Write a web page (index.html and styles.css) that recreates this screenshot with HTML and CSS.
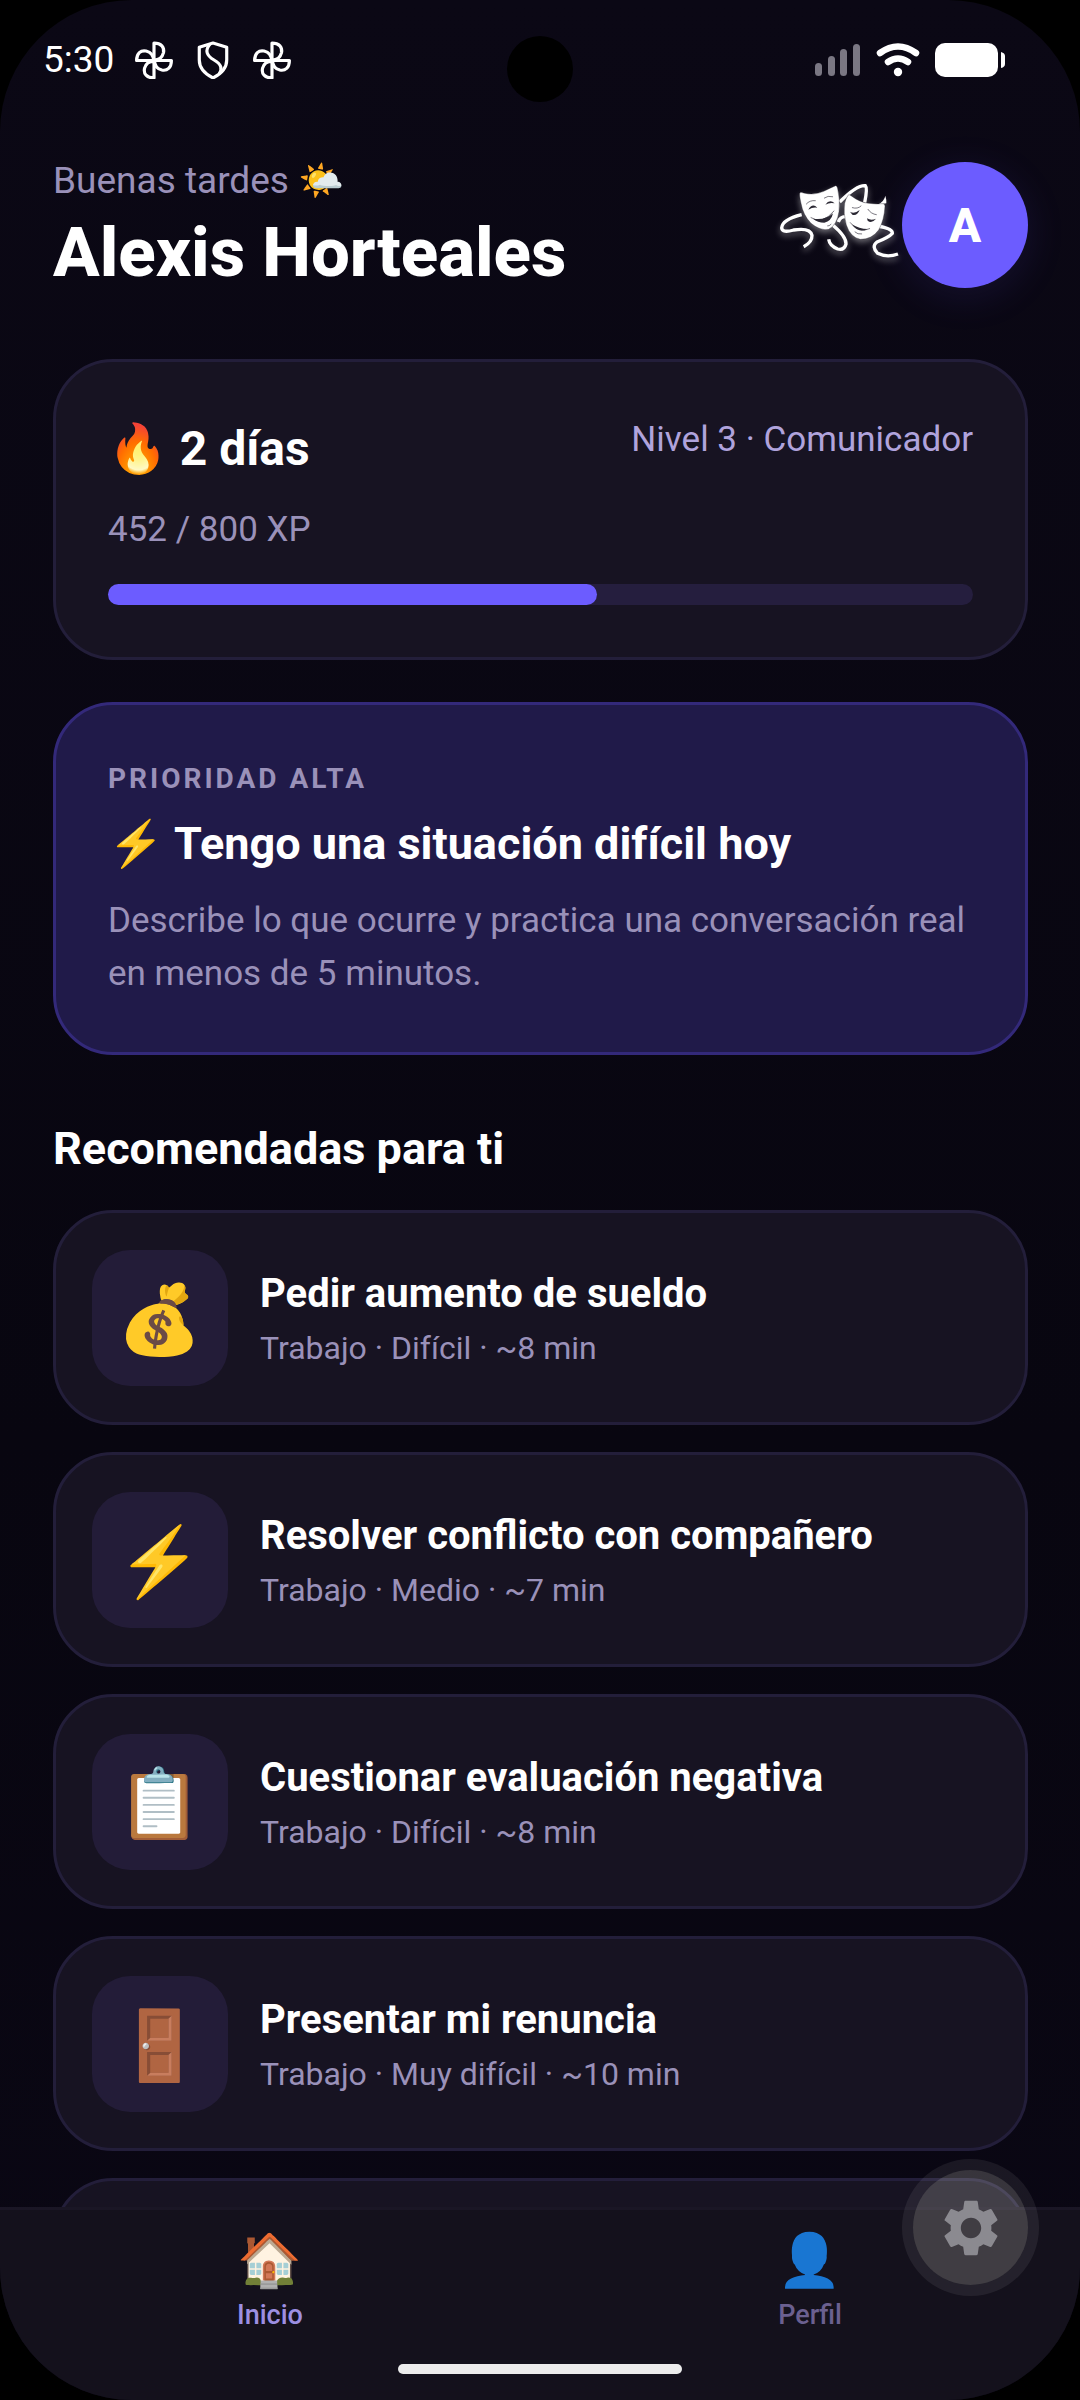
FILE: index.html
```html
<!DOCTYPE html>
<html lang="es">
<head>
<meta charset="utf-8">
<meta name="viewport" content="width=device-width, initial-scale=1">
<title>Inicio</title>
<link rel="stylesheet" href="styles.css">
</head>
<body>
<svg class="defs" aria-hidden="true">
  <symbol id="pinwheel" viewBox="0 0 36 36">
    <g fill="none" stroke="#fff" stroke-width="3" stroke-linejoin="round">
      <path d="M18 19V2C25 2 28 6 27 11C26 15 23 18 18 18"/>
      <path d="M18 19V2C25 2 28 6 27 11C26 15 23 18 18 18" transform="rotate(90 18 18.500)"/>
      <path d="M18 19V2C25 2 28 6 27 11C26 15 23 18 18 18" transform="rotate(180 18 18.500)"/>
      <path d="M18 19V2C25 2 28 6 27 11C26 15 23 18 18 18" transform="rotate(270 18 18.500)"/>
    </g>
  </symbol>
</svg>
<div class="screen">
  <div class="status">
    <div class="status-group status-left">
      <time class="clock">5:30</time>
      <svg class="status-icon" aria-hidden="true"><use href="#pinwheel"/></svg>
      <svg class="status-icon" viewBox="0 0 36 36" aria-hidden="true"><g fill="none" stroke="#fff" stroke-width="3" stroke-linejoin="round"><path d="M18 2L31 6V18C31 26 26 31 18 35C10 31 5 26 5 18V6Z"/><path d="M15 3C10 9 12 14 19 18C26 22 27 26 24 31"/></g></svg>
      <svg class="status-icon" aria-hidden="true"><use href="#pinwheel"/></svg>
    </div>
    <span class="camera"></span>
    <div class="status-group status-right">
      <svg class="signal" viewBox="0 0 46 34" aria-hidden="true"><g fill="#7a7783"><rect x="0" y="20" width="7" height="13" rx="3.500"/><rect x="13" y="13" width="7" height="20" rx="3.500"/><rect x="25" y="6" width="7" height="27" rx="3.500"/><rect x="38" y="1" width="7" height="32" rx="3.500"/></g></svg>
      <svg class="wifi" viewBox="0 0 44 34" aria-hidden="true"><g fill="none" stroke="#fff" stroke-width="6.500" stroke-linecap="round"><path d="M4 10Q22 -3 40 10"/><path d="M12 19Q22 12 32 19"/></g><circle cx="22" cy="29" r="4.200" fill="#fff"/></svg>
      <svg class="battery" viewBox="0 0 71 34" aria-hidden="true"><rect width="63" height="34" rx="10" fill="#fff"/><path d="M66 9Q70 10 70 13V21Q70 24 66 25Z" fill="#fff"/></svg>
    </div>
  </div>

  <main class="content">
    <header class="header">
      <div class="hello">
        <p class="greeting">Buenas tardes 🌤️</p>
        <h1 class="name">Alexis Horteales</h1>
      </div>
      <svg class="masks" viewBox="50 90 375 270" role="img" aria-label="Máscaras de teatro">
        <g fill="none" stroke="#fff" stroke-width="10">
          <path d="M124 194Q66 208 64 234Q66 250 100 240Q150 232 155 256Q156 276 130 290"/>
          <path d="M218 226Q258 260 257 282Q252 302 232 297Q208 288 205 268"/>
          <path d="M234 216Q240 198 258 200"/>
          <path d="M238 156Q290 104 315 107Q322 114 313 158"/>
          <path d="M352 228Q398 236 396 250Q385 262 350 276Q332 290 352 310Q380 324 413 312"/>
        </g>
        <path fill="#fff" d="M352 164Q372 154 375 137Q379 150 378 160Z"/>
        <path fill="#fff" stroke="#17141f" stroke-width="1" d="M118 130Q120 124 130 129Q160 137 190 124Q212 113 226 107Q231 107 232 116Q240 150 236 185Q230 225 205 238Q180 243 152 220Q128 195 122 160Q117 138 118 130Z"/>
        <path fill="#fff" stroke="#17141f" stroke-width="1" d="M262 138Q264 131 272 137Q300 158 325 160Q350 163 366 161Q374 160 374 168Q372 210 355 240Q335 268 300 268Q270 262 258 225Q248 190 253 160Q256 146 262 138Z"/>
        <g fill="none" stroke="#3a3742" stroke-width="2" stroke-linecap="round">
          <path d="M138 162Q148 150 165 152"/><path d="M192 144Q202 136 217 140"/>
          <path d="M152 203Q185 226 221 183"/><path d="M202 228Q206 229 212 223"/>
          <path d="M276 173Q292 178 302 168"/><path d="M323 178Q332 192 348 194"/>
          <path d="M270 218Q294 252 328 236"/><path d="M284 246Q292 254 304 252"/>
        </g>
        <g fill="#2b2833">
          <path d="M144 179Q156 158 171 173Q158 170 144 179Z"/><path d="M195 164Q208 146 223 160Q208 156 195 164Z"/>
          <path d="M158 206Q194 212 218 190Q213 214 192 218Q172 218 158 206Z"/>
          <path d="M269 185Q282 193 298 180Q290 199 276 194Z"/><path d="M320 205Q332 213 347 206Q334 222 322 212Z"/>
          <path d="M275 223Q296 237 322 237Q294 251 275 223Z"/>
        </g>
      </svg>
      <button class="avatar" type="button" aria-label="Cuenta de Alexis">A</button>
    </header>

    <section class="card progress-card">
      <div class="streak-row">
        <p class="streak">🔥 2 días</p>
        <p class="level">Nivel 3 · Comunicador</p>
      </div>
      <p class="xp">452 / 800 XP</p>
      <div class="track" role="progressbar" aria-valuemin="0" aria-valuemax="800" aria-valuenow="452" aria-label="Experiencia"><div class="fill" style="width: 56.5%"></div></div>
    </section>

    <a class="card priority" href="#situacion">
      <span class="eyebrow">PRIORIDAD ALTA</span>
      <strong class="priority-title">⚡ Tengo una situación difícil hoy</strong>
      <span class="priority-text">Describe lo que ocurre y practica una conversación real en menos de 5 minutos.</span>
    </a>

    <h2 class="section-title">Recomendadas para ti</h2>
    <ul class="list">
      <li><a class="card item" href="#aumento"><span class="item-icon">💰</span><span class="item-body"><span class="item-title">Pedir aumento de sueldo</span><span class="item-meta">Trabajo · Difícil · ~8 min</span></span></a></li>
      <li><a class="card item" href="#conflicto"><span class="item-icon">⚡</span><span class="item-body"><span class="item-title">Resolver conflicto con compañero</span><span class="item-meta">Trabajo · Medio · ~7 min</span></span></a></li>
      <li><a class="card item" href="#evaluacion"><span class="item-icon">📋</span><span class="item-body"><span class="item-title">Cuestionar evaluación negativa</span><span class="item-meta">Trabajo · Difícil · ~8 min</span></span></a></li>
      <li><a class="card item" href="#renuncia"><span class="item-icon">🚪</span><span class="item-body"><span class="item-title">Presentar mi renuncia</span><span class="item-meta">Trabajo · Muy difícil · ~10 min</span></span></a></li>
      <li><div class="card item"></div></li>
    </ul>
  </main>

  <footer class="bottom">
    <nav class="tabs">
      <a class="tab tab-active" href="#inicio"><span class="tab-icon">🏠</span><span>Inicio</span></a>
      <a class="tab" href="#perfil"><span class="tab-icon">👤</span><span>Perfil</span></a>
    </nav>
    <div class="home-bar"></div>
  </footer>

  <button class="fab" type="button" aria-label="Ajustes">
    <svg viewBox="0 0 24 24" aria-hidden="true"><path d="M19.140 12.940c.04-.3.06-.61.06-.94 0-.32-.02-.64-.07-.94l2.030-1.580c.18-.14.23-.41.12-.61l-1.920-3.320c-.12-.22-.37-.29-.59-.22l-2.390.96c-.5-.38-1.030-.7-1.620-.94l-.36-2.540c-.04-.24-.24-.41-.48-.41h-3.840c-.24 0-.43.17-.47.41l-.36 2.540c-.59.24-1.130.57-1.620.94l-2.390-.96c-.22-.08-.47 0-.59.22L2.740 8.870c-.12.21-.08.47.12.61l2.030 1.580c-.05.3-.09.63-.09.94s.02.64.07.94l-2.030 1.580c-.18.14-.23.41-.12.61l1.920 3.320c.12.22.37.29.59.22l2.390-.96c.5.38 1.030.7 1.620.94l.36 2.540c.05.24.24.41.48.41h3.840c.24 0 .44-.17.47-.41l.36-2.540c.59-.24 1.130-.56 1.620-.94l2.390.96c.22.08.47 0 .59-.22l1.920-3.320c.12-.22.07-.47-.12-.61l-2.010-1.580zM12 15.600c-1.980 0-3.600-1.620-3.600-3.600s1.620-3.600 3.600-3.600 3.600 1.620 3.600 3.600-1.620 3.600-3.600 3.600z"/></svg>
  </button>
</div>
</body>
</html>
```
FILE: styles.css
```css
* { box-sizing: border-box; }
body { margin: 0; background: #000; font-family: Roboto, "Noto Color Emoji", sans-serif; color: #fff; }
p, h1, h2, ul { margin: 0; padding: 0; }
ul { list-style: none; }
a { color: inherit; text-decoration: none; }
button { border: 0; padding: 0; color: inherit; font-family: inherit; }
.defs { position: absolute; width: 0; height: 0; }

.screen { position: relative; display: flex; flex-direction: column; height: 100vh; overflow: hidden; border-radius: 132px; background: linear-gradient(#0b0815, #080610 60%, #0a0714); }

.status { position: relative; flex: none; display: flex; justify-content: space-between; align-items: center; height: 120px; padding: 0 74px 0 43px; }
.status-group { display: flex; align-items: center; }
.status-left { gap: 21px; }
.status-right { gap: 15px; }
.clock { font-size: 37px; line-height: 44px; }
.status-icon { width: 38px; height: 38px; }
.signal { width: 46px; height: 34px; }
.wifi { width: 44px; height: 34px; }
.battery { width: 71px; height: 34px; }
.camera { position: absolute; left: 50%; top: 36px; width: 66px; height: 66px; margin-left: -33px; border-radius: 50%; background: #000; }

.content { flex: 1; min-height: 0; overflow: hidden; padding: 34px 52px 0 53px; }
.header { display: flex; align-items: center; min-height: 142px; }
.hello { flex: 1; align-self: flex-start; padding-top: 5px; }
.greeting { font-size: 37px; line-height: 44px; color: #9a91b9; }
.name { margin-top: 8px; font-size: 69px; line-height: 84px; font-weight: 800; white-space: nowrap; }
.masks { width: 125px; height: 90px; filter: drop-shadow(0 3px 3px rgba(255, 255, 255, .4)); }
.avatar { width: 126px; height: 126px; border-radius: 50%; background: #6c5cff; font-size: 48px; font-weight: 800; box-shadow: 0 8px 40px rgba(108, 92, 255, .12); }

.card { display: block; border: 3px solid #231e3a; border-radius: 60px; background: #171322; }
.progress-card { margin-top: 63px; padding: 55px 52px 52px; }
.streak-row { display: flex; justify-content: space-between; }
.streak { font-size: 48px; line-height: 64px; font-weight: 700; }
.level { font-size: 35px; line-height: 45px; color: #b0a3dc; }
.xp { margin-top: 26px; font-size: 35px; line-height: 45px; color: #9a91b9; }
.track { height: 21px; margin-top: 32px; border-radius: 11px; background: #251e3e; }
.fill { height: 100%; border-radius: 11px; background: #6c5cff; }

.priority { display: flex; flex-direction: column; margin-top: 42px; padding: 55px 52px 52px; border-color: #33297a; background: #201a49; }
.eyebrow { font-size: 28px; line-height: 38px; font-weight: 700; letter-spacing: 3px; color: #9a91b9; }
.priority-title { margin-top: 14px; font-size: 45px; line-height: 64px; font-weight: 700; }
.priority-text { margin-top: 18px; font-size: 35px; line-height: 53px; color: #9a91b9; }

.section-title { margin: 64px 0 31px; font-size: 45px; line-height: 60px; font-weight: 700; }
.list { display: flex; flex-direction: column; gap: 27px; }
.item { display: flex; align-items: center; gap: 32px; min-height: 215px; padding: 36px; }
.item-icon { flex: none; display: flex; align-items: center; justify-content: center; width: 136px; height: 136px; padding-top: 4px; border-radius: 38px; background: #231c38; font-size: 68px; }
.item-body { display: flex; flex-direction: column; gap: 8px; padding-top: 5px; }
.item-title { font-size: 40px; line-height: 48px; font-weight: 700; }
.item-meta { font-size: 32px; line-height: 44px; color: #9a91b9; }

.bottom { flex: none; border-top: 3px solid #1a1625; background: #14111c; }
.tabs { display: grid; grid-template-columns: 1fr 1fr; padding-top: 17px; }
.tab { display: flex; flex-direction: column; align-items: center; gap: 4px; font-size: 27px; line-height: 32px; font-weight: 500; color: #6b6090; }
.tab-active { color: #9d8fe2; }
.tab-icon { font-size: 52px; line-height: 68px; }
.home-bar { width: 284px; height: 10px; margin: 33px auto 26px; border-radius: 5px; background: #ececec; }

.fab { position: absolute; right: 41px; bottom: 104px; display: grid; place-items: center; width: 137px; height: 137px; border: 11px solid rgba(255, 255, 255, .07); border-radius: 50%; background: rgba(255, 255, 240, .19); background-clip: padding-box; }
.fab svg { width: 68px; height: 68px; fill: #8b8a90; }
```
